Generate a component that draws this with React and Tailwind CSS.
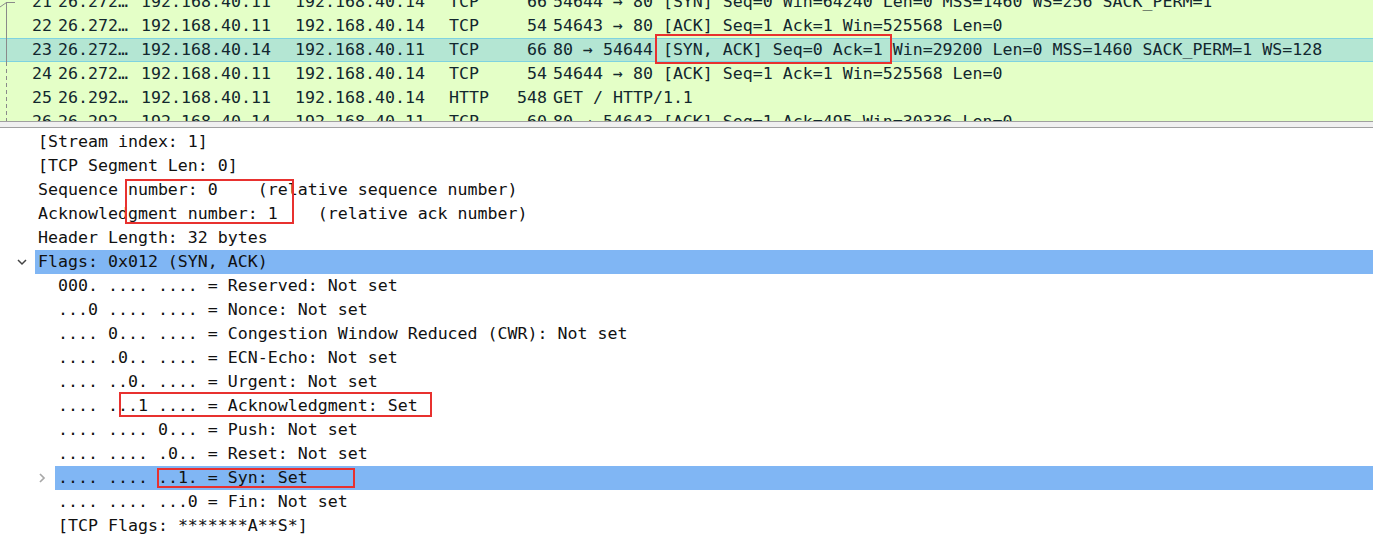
import React from "react";

const packets = [
  { no: "21", time: "26.272…", src: "192.168.40.11", dst: "192.168.40.14", proto: "TCP", len: "66", info: "54644 → 80 [SYN] Seq=0 Win=64240 Len=0 MSS=1460 WS=256 SACK_PERM=1" },
  { no: "22", time: "26.272…", src: "192.168.40.11", dst: "192.168.40.14", proto: "TCP", len: "54", info: "54643 → 80 [ACK] Seq=1 Ack=1 Win=525568 Len=0" },
  { no: "23", time: "26.272…", src: "192.168.40.14", dst: "192.168.40.11", proto: "TCP", len: "66", info: "80 → 54644 [SYN, ACK] Seq=0 Ack=1 Win=29200 Len=0 MSS=1460 SACK_PERM=1 WS=128", sel: true },
  { no: "24", time: "26.272…", src: "192.168.40.11", dst: "192.168.40.14", proto: "TCP", len: "54", info: "54644 → 80 [ACK] Seq=1 Ack=1 Win=525568 Len=0" },
  { no: "25", time: "26.292…", src: "192.168.40.11", dst: "192.168.40.14", proto: "HTTP", len: "548", info: "GET / HTTP/1.1" },
  { no: "26", time: "26.292…", src: "192.168.40.14", dst: "192.168.40.11", proto: "TCP", len: "60", info: "80 → 54643 [ACK] Seq=1 Ack=495 Win=30336 Len=0" },
];

const details = [
  { lvl: 1, t: "[Stream index: 1]" },
  { lvl: 1, t: "[TCP Segment Len: 0]" },
  { lvl: 1, t: "Sequence number: 0    (relative sequence number)" },
  { lvl: 1, t: "Acknowledgment number: 1    (relative ack number)" },
  { lvl: 1, t: "Header Length: 32 bytes" },
  { lvl: 1, t: "Flags: 0x012 (SYN, ACK)", open: true, hl: true },
  { lvl: 2, t: "000. .... .... = Reserved: Not set" },
  { lvl: 2, t: "...0 .... .... = Nonce: Not set" },
  { lvl: 2, t: ".... 0... .... = Congestion Window Reduced (CWR): Not set" },
  { lvl: 2, t: ".... .0.. .... = ECN-Echo: Not set" },
  { lvl: 2, t: ".... ..0. .... = Urgent: Not set" },
  { lvl: 2, t: ".... ...1 .... = Acknowledgment: Set" },
  { lvl: 2, t: ".... .... 0... = Push: Not set" },
  { lvl: 2, t: ".... .... .0.. = Reset: Not set" },
  { lvl: 2, t: ".... .... ..1. = Syn: Set", closed: true, hl: true },
  { lvl: 2, t: ".... .... ...0 = Fin: Not set" },
  { lvl: 2, t: "[TCP Flags: *******A**S*]" },
];

function Chevron({ open, grey }) {
  return open ? (
    <svg width="12" height="12" viewBox="0 0 12 12" className="block">
      <path d="M2 4 L6 8 L10 4" fill="none" stroke="#444" strokeWidth="1.5" />
    </svg>
  ) : (
    <svg width="12" height="12" viewBox="0 0 12 12" className="block">
      <path d="M4 2 L8 6 L4 10" fill="none" stroke={grey ? "#a8a8a8" : "#555"} strokeWidth="1.7" />
    </svg>
  );
}

export default function App() {
  return (
    <div
      className="relative w-[1373px] h-[538px] overflow-hidden bg-white text-[16.6px] leading-[24px] whitespace-pre"
      style={{ fontFamily: "'DejaVu Sans Mono', 'Liberation Mono', monospace" }}
    >
      {/* Packet list */}
      <div className="relative h-[121px] overflow-hidden bg-[#e4ffc7] text-[#12272e]">
        <div className="mt-[-10px] flex flex-col">
          {packets.map((p) => (
            <div
              key={p.no}
              className={
                "flex h-[24px] items-center " +
                (p.sel ? "bg-[#b4e6d3] border-y border-[#7fd3e0]" : "")
              }
            >
              <span className="w-[52px] text-right">{p.no}</span>
              <span className="ml-[6px] w-[83px]">{p.time}</span>
              <span className="w-[154px]">{p.src}</span>
              <span className="w-[154px]">{p.dst}</span>
              <span className="w-[62px]">{p.proto}</span>
              <span className="w-[36px] text-right">{p.len}</span>
              <span className="ml-[6px]">{p.info}</span>
            </div>
          ))}
        </div>
        {/* related packet indicator */}
        <svg className="absolute left-0 top-0" width="20" height="121">
          <path d="M0 7 L6.5 2.5 L15 2.5" fill="none" stroke="#8a8a8a" strokeWidth="1" />
          <line x1="6.5" y1="2" x2="6.5" y2="62" stroke="#8a8a8a" strokeWidth="1" />
          <line x1="6.5" y1="62" x2="6.5" y2="121" stroke="#8a8a8a" strokeWidth="1" strokeDasharray="4 3" />
        </svg>
      </div>
      {/* splitter */}
      <div className="h-[7px] border-y border-[#a0a0a0] bg-[#f0f0f0]" />
      {/* Details */}
      <div className="flex flex-col pt-[2px] text-[#111]">
        {details.map((d, i) => (
          <div key={i} className="relative flex h-[24px] items-center">
            <span className={"flex justify-end pr-[7px] " + (d.lvl === 1 ? "w-[35px]" : "w-[55px]")}>
              {d.open ? <Chevron open /> : d.closed ? <Chevron grey /> : null}
            </span>
            <span className={"flex-1 pl-[3px] " + (d.hl ? "bg-[#80b6f4]" : "")}>{d.t}</span>
          </div>
        ))}
      </div>

      {/* annotation boxes */}
      <div className="pointer-events-none absolute left-[655px] top-[34px] h-[30px] w-[237px] border-2 border-[#e8312f]" />
      <div className="pointer-events-none absolute left-[125px] top-[179px] h-[45px] w-[169px] border-2 border-[#e8312f]" />
      <div className="pointer-events-none absolute left-[119px] top-[392px] h-[25px] w-[313px] border-2 border-[#e8312f]" />
      <div className="pointer-events-none absolute left-[157px] top-[468px] h-[20px] w-[198px] border-2 border-[#e8312f]" />
    </div>
  );
}
